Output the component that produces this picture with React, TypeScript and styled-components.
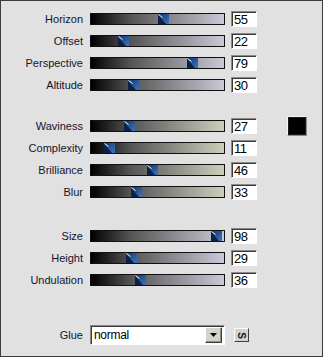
import React from 'react';
import styled, { createGlobalStyle } from 'styled-components';

const GlobalStyle = createGlobalStyle`
  html, body {
    margin: 0;
    padding: 0;
    background: #e1e1e1;
  }
`;

//styled
const Panel = styled.div`
  box-sizing: border-box;
  width: 323px;
  height: 357px;
  border: 1px solid #3c3c3c;
  background: #e1e1e1;
  padding-top: 10px;
  font-family: "Liberation Sans", Arial, sans-serif;
  display: flex;
  flex-direction: column;
`;

const Group = styled.div<{ $gap: number }>`
  display: flex;
  flex-direction: column;
  margin-top: ${(p) => p.$gap}px;
`;

const Row = styled.div`
  display: flex;
  align-items: flex-start;
  height: 22px;
`;

const Label = styled.div`
  width: 82px;
  text-align: right;
  font-size: 11px;
  line-height: 16px;
  color: #14142c;
`;

const Track = styled.div<{ $tone: 'blue' | 'sand' }>`
  position: relative;
  box-sizing: border-box;
  width: 135px;
  height: 12px;
  margin: 2px 0 0 7px;
  border: 1px solid #111;
  background: linear-gradient(
    to right,
    #000 0%,
    #555 30%,
    ${(p) => (p.$tone === 'blue' ? '#c9c9d7' : '#cdcdbd')} 100%
  );
`;

const Thumb = styled.svg`
  position: absolute;
  top: 0;
  width: 11px;
  height: 10px;
  display: block;
`;

const ValueBox = styled.div`
  box-sizing: border-box;
  width: 26px;
  height: 16px;
  margin-left: 6px;
  border: 1px solid;
  border-color: #8a8a8a #ffffff #ffffff #8a8a8a;
  box-shadow: inset 1px 1px 0 #3a3a3a;
  background: #fff;
  padding-left: 2px;
  font-family: "Liberation Sans Narrow", "Liberation Sans", Arial, sans-serif;
  font-size: 13px;
  letter-spacing: -0.4px;
  line-height: 15px;
  color: #000;
`;

const Swatch = styled.div`
  box-sizing: border-box;
  width: 20px;
  height: 20px;
  margin: -2px 0 0 30px;
  border: 1px solid;
  border-color: #f4f4f4 #8a8a8a #8a8a8a #f4f4f4;
  background: #000;
  box-shadow: inset 0 0 0 1px #1a1a1a;
`;

const GlueRow = styled.div`
  display: flex;
  align-items: center;
  margin-top: 31px;
  height: 20px;
`;

const Select = styled.div`
  box-sizing: border-box;
  position: relative;
  display: flex;
  align-items: center;
  width: 135px;
  height: 20px;
  margin-left: 7px;
  border: 1px solid;
  border-color: #8a8a8a #ffffff #ffffff #8a8a8a;
  box-shadow: inset 1px 1px 0 #3a3a3a;
  background: #fff;
  padding: 0 2px 0 3px;
`;

const SelectText = styled.span`
  flex: 1;
  font-family: "Liberation Sans Narrow", "Liberation Sans", Arial, sans-serif;
  font-size: 12px;
  letter-spacing: -0.3px;
  color: #000;
`;

const DropButton = styled.div`
  box-sizing: border-box;
  width: 17px;
  height: 16px;
  display: flex;
  align-items: center;
  justify-content: center;
  background: #d6d3cc;
  border: 1px solid;
  border-color: #fff #404040 #404040 #fff;
  box-shadow: inset -1px -1px 0 #8a8a8a;
`;

const SmallButton = styled.div`
  box-sizing: border-box;
  width: 15px;
  height: 14px;
  margin-left: 9px;
  display: flex;
  align-items: center;
  justify-content: center;
  background: #d6d3cc;
  border: 1px solid;
  border-color: #fff #404040 #404040 #fff;
  font-size: 10px;
  font-weight: bold;
  color: #111;
  span {
    display: block;
    transform: rotate(90deg);
  }
`;

//data
interface Param {
  name: string;
  value: number;
}

const groups: { tone: 'blue' | 'sand'; gap: number; params: Param[] }[] = [
  {
    tone: 'blue',
    gap: 0,
    params: [
      { name: 'Horizon', value: 55 },
      { name: 'Offset', value: 22 },
      { name: 'Perspective', value: 79 },
      { name: 'Altitude', value: 30 },
    ],
  },
  {
    tone: 'sand',
    gap: 19,
    params: [
      { name: 'Waviness', value: 27 },
      { name: 'Complexity', value: 11 },
      { name: 'Brilliance', value: 46 },
      { name: 'Blur', value: 33 },
    ],
  },
  {
    tone: 'blue',
    gap: 22,
    params: [
      { name: 'Size', value: 98 },
      { name: 'Height', value: 29 },
      { name: 'Undulation', value: 36 },
    ],
  },
];

const SliderThumb: React.FC<{ value: number }> = ({ value }) => (
  <Thumb viewBox="0 0 11 10" style={{ left: `${Math.round((value / 100) * 122)}px` }}>
    <defs>
      <linearGradient id="thumbFill" x1="0" y1="0" x2="1" y2="1">
        <stop offset="0" stopColor="#163668" />
        <stop offset="1" stopColor="#3a76c4" />
      </linearGradient>
    </defs>
    <rect x="0" y="0" width="11" height="10" fill="url(#thumbFill)" />
    <polygon points="0,1 0,10 8,10" fill="#0d2148" />
    <line x1="0.5" y1="0.5" x2="4.5" y2="3.5" stroke="#fff" strokeWidth="1" />
  </Thumb>
);

const App: React.FC = () => {
  return (
    <>
      <GlobalStyle />
      <Panel>
        {groups.map((g, gi) => (
          <Group key={gi} $gap={g.gap}>
            {g.params.map((p) => (
              <Row key={p.name}>
                <Label>{p.name}</Label>
                <Track $tone={g.tone}>
                  <SliderThumb value={p.value} />
                </Track>
                <ValueBox>{p.value}</ValueBox>
                {p.name === 'Waviness' && <Swatch />}
              </Row>
            ))}
          </Group>
        ))}
        <GlueRow>
          <Label>Glue</Label>
          <Select>
            <SelectText>normal</SelectText>
            <DropButton>
              <svg width="7" height="4" viewBox="0 0 7 4">
                <polygon points="0,0 7,0 3.5,4" fill="#000" />
              </svg>
            </DropButton>
          </Select>
          <SmallButton>
            <span>S</span>
          </SmallButton>
        </GlueRow>
      </Panel>
    </>
  );
};

export default App;
